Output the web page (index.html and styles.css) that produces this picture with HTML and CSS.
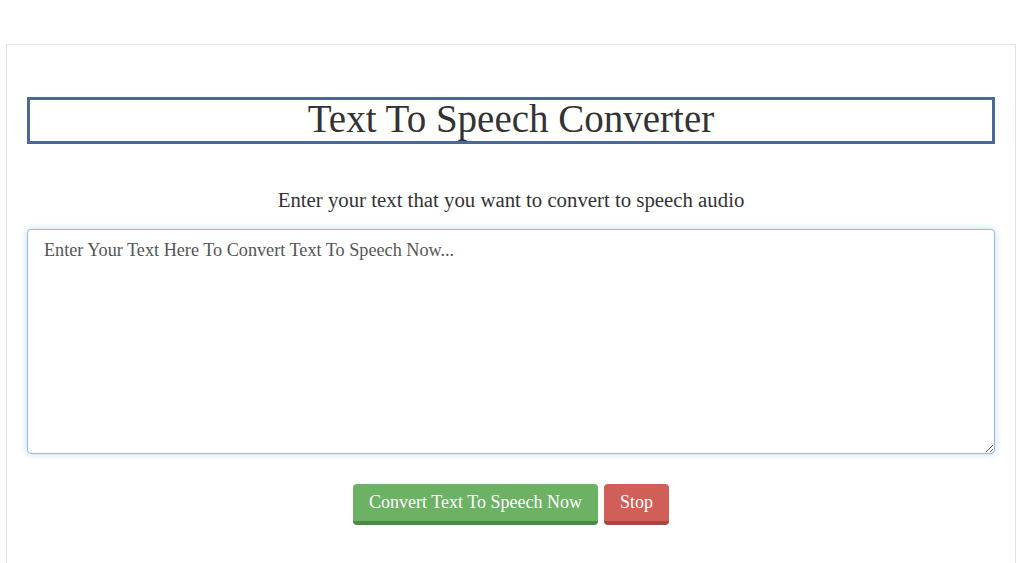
FILE: index.html
```html
<!DOCTYPE html>
<html lang="en">
<head>
    <meta charset="UTF-8">
    <meta name="viewport" content="width=device-width, initial-scale=1.0">
    <title>Text To Speech Converter</title>
    <link rel="stylesheet" href="styles.css">
</head>
<body>
    <div class="container">
        <h1 class="title">Text To Speech Converter</h1>
        <p class="intro">Enter your text that you want to convert to speech audio</p>
        <textarea class="text-input" placeholder="Enter Your Text Here To Convert Text To Speech Now..."></textarea>
        <div class="actions">
            <button class="btn btn-convert">Convert Text To Speech Now</button>
            <button class="btn btn-stop">Stop</button>
        </div>
    </div>
</body>
</html>
```

FILE: styles.css
```css
body {
    margin: 0;
    padding: 44px 8px 0 6px;
    font-family: "Liberation Serif", "Times New Roman", serif;
    background-color: #fff;
    color: #333;
}

.container {
    border: 1px solid #e3e3e3;
    border-bottom: none;
    padding: 52px 20px 38px 20px;
}

.title {
    margin: 0;
    padding: 0 0 3px 0;
    border: 3px solid #4a6996;
    font-size: 39px;
    font-weight: normal;
    line-height: 38px;
    text-align: center;
    color: #333;
}

.intro {
    margin: 44px 0 17px 0;
    font-size: 20.8px;
    line-height: 24px;
    text-align: center;
    color: #333;
}

.text-input {
    display: block;
    box-sizing: border-box;
    width: 100%;
    height: 225px;
    padding: 10px 16px;
    border: 1px solid #93bbe8;
    border-radius: 4px;
    box-shadow: 0 0 7px rgba(102, 160, 230, 0.4);
    font-family: "Liberation Serif", "Times New Roman", serif;
    font-size: 18.2px;
    line-height: 20px;
    color: #333;
    outline: none;
}

.text-input::placeholder {
    color: #555;
}

.actions {
    display: flex;
    justify-content: center;
    gap: 6px;
    margin-top: 30px;
}

.btn {
    border: none;
    border-radius: 4px;
    padding: 0 16px;
    height: 41px;
    font-family: "Liberation Serif", "Times New Roman", serif;
    font-size: 18px;
    color: #fff;
    cursor: pointer;
}

.btn-convert {
    background-color: #6cb164;
    border-bottom: 4px solid #4b8a45;
}

.btn-stop {
    background-color: #d05f58;
    border-bottom: 4px solid #a84741;
}
```
